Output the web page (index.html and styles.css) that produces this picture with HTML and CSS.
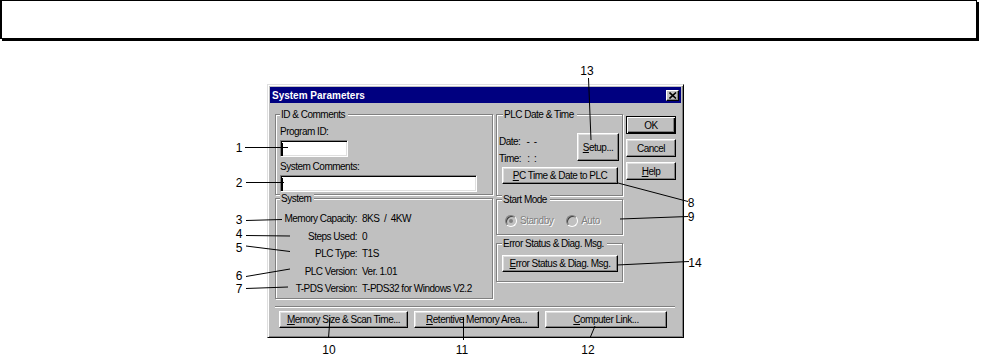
FILE: index.html
```html
<!DOCTYPE html>
<html lang="en">
<head>
  <meta charset="UTF-8" />
  <meta name="viewport" content="width=device-width, initial-scale=1" />
  <title>System Parameters</title>
  <link rel="stylesheet" href="styles.css">
</head>
<body>

  <div class="banner"></div>

  <div class="stage">
    <div class="dialog">
      <div class="titlebar">
        <span class="title">System Parameters</span>
        <span class="close">
          <svg width="8" height="7" viewBox="0 0 8 7"><path d="M0.5 0.5 L7 6.5 M7 0.5 L0.5 6.5" stroke="#000" stroke-width="1.6" fill="none"/></svg>
        </span>
      </div>

      <div class="dialog-body">
        <!-- left column -->
        <div class="col-left">
          <div class="group group-id">
            <span class="gt">ID &amp; Comments</span>
            <span class="label">Program ID:</span>
            <div class="field field-short"><span class="caret"></span></div>
            <span class="label label-2">System Comments:</span>
            <div class="field field-long"><span class="caret"></span></div>
          </div>

          <div class="group group-system">
            <span class="gt">System</span>
            <div class="info">
              <span class="key">Memory Capacity:</span><span>8KS&nbsp; /&nbsp; 4KW</span>
              <span class="key">Steps Used:</span><span>0</span>
              <span class="key">PLC Type:</span><span>T1S</span>
              <span class="key">PLC Version:</span><span>Ver. 1.01</span>
              <span class="key">T-PDS Version:</span><span>T-PDS32 for Windows V2.2</span>
            </div>
          </div>
        </div>

        <!-- middle column -->
        <div class="col-mid">
          <div class="group group-clock">
            <span class="gt">PLC Date &amp; Time</span>
            <div class="clock-row">
              <div class="clock-text">
                <div>Date:<span class="clock-val">-&nbsp; -</span></div>
                <div>Time:<span class="clock-val">:&nbsp; :</span></div>
              </div>
              <button class="btn btn-setup"><u>S</u>etup...</button>
            </div>
            <button class="btn btn-wide"><u>P</u>C Time &amp; Date to PLC</button>
          </div>

          <div class="group group-mode">
            <span class="gt">Start Mode</span>
            <div class="radios">
              <span class="radio checked"></span><span class="dim">Standby</span>
              <span class="radio radio-2"></span><span class="dim">Auto</span>
            </div>
          </div>

          <div class="group group-error">
            <span class="gt">Error Status &amp; Diag. Msg.</span>
            <button class="btn btn-wide btn-error"><u>E</u>rror Status &amp; Diag. Msg.</button>
          </div>
        </div>

        <!-- right column -->
        <div class="col-right">
          <button class="btn btn-side btn-default">OK</button>
          <button class="btn btn-side">Cancel</button>
          <button class="btn btn-side"><u>H</u>elp</button>
        </div>
      </div>

      <div class="separator"></div>

      <div class="bottom-row">
        <button class="btn btn-memory"><u>M</u>emory Size &amp; Scan Time...</button>
        <button class="btn btn-retentive"><u>R</u>etentive Memory Area...</button>
        <button class="btn btn-link"><u>C</u>omputer Link...</button>
      </div>
    </div>
  </div>

  <!-- callout lines and numbers -->
  <svg class="callouts" width="981" height="362" viewBox="0 0 981 362">
    <g stroke="#000" stroke-width="1" fill="none">
      <line x1="245" y1="147.5" x2="288" y2="147.5"/>
      <line x1="246" y1="182.5" x2="284" y2="182.5"/>
      <line x1="246" y1="220.5" x2="282" y2="219.5"/>
      <line x1="246" y1="235.5" x2="290" y2="236"/>
      <line x1="246" y1="246" x2="290" y2="251.5"/>
      <line x1="246" y1="276.5" x2="290" y2="269"/>
      <line x1="246" y1="288.5" x2="288" y2="287"/>
      <line x1="618" y1="183" x2="688" y2="201.5"/>
      <line x1="620" y1="219" x2="688" y2="216.5"/>
      <line x1="617" y1="265" x2="689" y2="261.5"/>
      <line x1="588.5" y1="78" x2="591" y2="140"/>
      <line x1="330" y1="318" x2="328.5" y2="338"/>
      <line x1="463.5" y1="317" x2="463.5" y2="340"/>
      <line x1="595" y1="326" x2="590" y2="338"/>
    </g>
    <g class="nums" text-anchor="middle">
      <text x="239" y="152">1</text>
      <text x="239" y="187">2</text>
      <text x="239" y="224">3</text>
      <text x="239" y="238">4</text>
      <text x="239" y="252">5</text>
      <text x="239" y="280">6</text>
      <text x="239" y="293">7</text>
      <text x="691" y="207">8</text>
      <text x="691" y="221">9</text>
      <text x="695" y="267">14</text>
      <text x="587" y="75">13</text>
      <text x="329" y="354">10</text>
      <text x="462" y="354">11</text>
      <text x="588" y="354">12</text>
    </g>
  </svg>

</body>
</html>
```

FILE: styles.css
```css
* {
  margin: 0;
  padding: 0;
  box-sizing: border-box;
}

html, body {
  width: 981px;
  height: 362px;
  overflow: hidden;
}

body {
  background: #fff;
  color: #000;
  font-family: "Liberation Sans", Arial, sans-serif;
  font-size: 10px;
  letter-spacing: -0.5px;
  position: relative;
}

u {
  text-decoration: underline;
  text-underline-offset: 1px;
}

/* top frame */
.banner {
  width: 977px;
  height: 39px;
  border: 1px solid #000;
  border-left-width: 2px;
  box-shadow: 2px 2px 0 #000;
}

.stage {
  padding: 45px 0 0 267px;
}

/* window */
.dialog {
  width: 417px;
  height: 254px;
  background: #c0c0c0;
  border: 1px solid;
  border-color: #dfdfdf #000 #000 #dfdfdf;
  box-shadow: inset 1px 1px 0 #fff, inset -1px -1px 0 #808080;
  padding: 2px;
}

.titlebar {
  height: 16px;
  background: #000080;
  color: #fff;
  display: flex;
  align-items: center;
  justify-content: space-between;
  padding: 0 2px;
}

.title {
  font-weight: bold;
  font-size: 10px;
  letter-spacing: 0;
}

.close {
  width: 13px;
  height: 11px;
  background: #c0c0c0;
  border: 1px solid;
  border-color: #fff #000 #000 #fff;
  box-shadow: inset -1px -1px 0 #808080;
  display: flex;
  align-items: center;
  justify-content: center;
}

.dialog-body {
  display: flex;
  gap: 3px;
  padding: 11px 5px 0 5px;
}

.col-left {
  width: 218px;
  display: flex;
  flex-direction: column;
  gap: 3px;
}

.col-mid {
  width: 127px;
  display: flex;
  flex-direction: column;
}

.col-right {
  width: 50px;
  display: flex;
  flex-direction: column;
  gap: 5px;
  padding-top: 2px;
}

/* etched group box */
.group {
  border: 1px solid #808080;
  box-shadow: inset 1px 1px 0 #fff, 1px 1px 0 #fff;
  padding: 0 4px;
}

.gt {
  display: block;
  width: fit-content;
  margin-top: -7px;
  padding: 0 3px 0 1px;
  background: #c0c0c0;
  line-height: 13px;
  white-space: nowrap;
}

.label {
  display: block;
  line-height: 13px;
  margin-top: 4px;
}

.label-2 {
  margin-top: 3px;
}

.field {
  height: 17px;
  margin-top: 2px;
  background: #fff;
  border: 1px solid;
  border-color: #808080 #fff #fff #808080;
  box-shadow: inset 1px 1px 0 #000, inset -1px -1px 0 #dfdfdf;
  padding: 2px 0 0 1px;
}

.caret {
  display: block;
  width: 1px;
  height: 13px;
  background: #000;
}

.field-short { width: 68px; }
.field-long { width: 197px; }

.group-id { height: 81px; }

.group-system { height: 101px; }

.info {
  display: grid;
  grid-template-columns: 76px auto;
  column-gap: 5px;
  line-height: 17.5px;
  margin-top: 5px;
  padding-left: 1px;
  white-space: nowrap;
}

.key {
  text-align: right;
}

/* date & time */
.group-clock {
  height: 82px;
  padding: 0 3px 0 5px;
}

.group-clock .gt,
.group-mode .gt,
.group-error .gt {
  margin-left: 1px;
}

.clock-row {
  display: flex;
  justify-content: space-between;
  height: 28px;
  margin-top: 12px;
}

.clock-text {
  margin-left: -3px;
  line-height: 17px;
}

.clock-val {
  margin-left: 6px;
}

/* buttons */
.btn {
  font: inherit;
  letter-spacing: inherit;
  color: #000;
  background: #c0c0c0;
  border: 1px solid;
  border-color: #fff #000 #000 #fff;
  box-shadow: inset -1px -1px 0 #808080, inset 1px 1px 0 #dfdfdf;
  height: 17px;
  white-space: nowrap;
  cursor: default;
}

.btn-setup {
  width: 42px;
  height: 28px;
}

.btn-wide {
  width: 116px;
  margin-top: 6px;
}

.btn-error {
  margin-top: 5px;
  margin-left: 1px;
}

.btn-side {
  width: 50px;
  height: 18px;
}

.btn-default {
  border-color: #000;
  box-shadow: inset 1px 1px 0 #fff, inset -1px -1px 0 #000, inset -2px -2px 0 #808080;
}

/* start mode */
.group-mode {
  height: 36px;
  margin-top: 3px;
}

.radios {
  display: flex;
  align-items: center;
  height: 13px;
  margin-top: 8px;
  margin-left: 4px;
}

.radio {
  width: 12px;
  height: 12px;
  border-radius: 50%;
  border: 1px solid;
  border-color: #808080 #fff #fff #808080;
  box-shadow: inset 1px 1px 0 #404040;
  background: #c0c0c0;
  display: flex;
  align-items: center;
  justify-content: center;
  margin-right: 3px;
}

.radio.checked::after {
  content: "";
  width: 4px;
  height: 4px;
  border-radius: 50%;
  background: #808080;
}

.radio-2 {
  margin-left: 13px;
}

.dim {
  color: #808080;
  text-shadow: 1px 1px 0 #fff;
}

.group-error {
  height: 39px;
  margin-top: 8px;
}

/* bottom */
.separator {
  margin: 7px 6px 0 5px;
  border-top: 1px solid #808080;
  border-bottom: 1px solid #fff;
}

.bottom-row {
  display: flex;
  gap: 6px;
  margin-top: 3px;
  padding-left: 9px;
}

.btn-memory { width: 129px; }
.btn-retentive { width: 125px; }
.btn-link { width: 122px; }

/* callouts */
.callouts {
  position: absolute;
  top: 0;
  left: 0;
  pointer-events: none;
}

.nums {
  font-family: "Liberation Sans", Arial, sans-serif;
  font-size: 12px;
  letter-spacing: 0;
  fill: #000;
}
```
